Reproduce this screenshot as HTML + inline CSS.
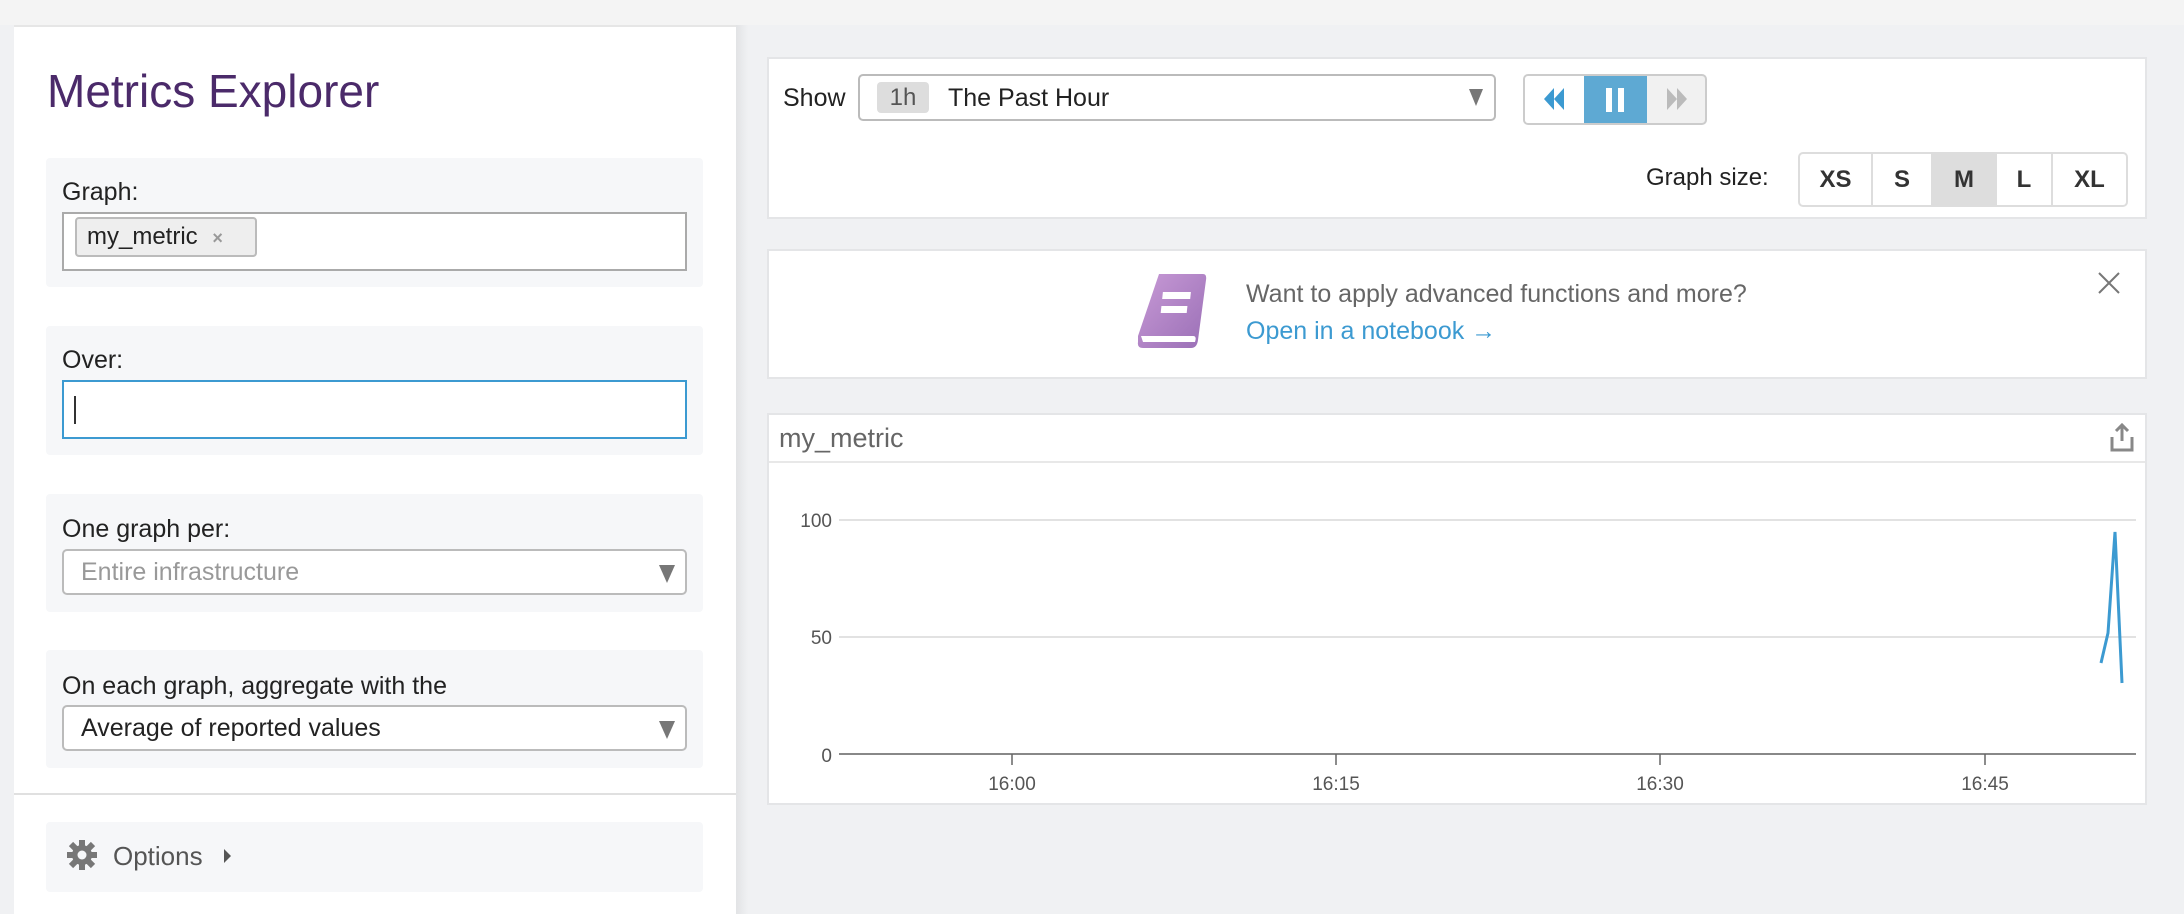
<!DOCTYPE html>
<html><head><meta charset="utf-8"><style>
*{box-sizing:border-box;margin:0;padding:0}
body{width:2184px;height:914px;background:#f0f1f3;font-family:"Liberation Sans",sans-serif;position:relative;overflow:hidden;color:#333}
.a{position:absolute}
.top{left:0;top:0;width:2184px;height:25px;background:#f4f4f4}
.panel{left:14px;top:25px;width:722px;height:889px;background:#fff;border-top:2px solid #e6e6e6}
.shadow{left:736px;top:25px;width:12px;height:889px;background:linear-gradient(90deg,#e2e3e5,#f0f1f3)}
.box{left:46px;width:657px;background:#f6f7f9;border-radius:4px}
.lbl{font-size:25px;color:#222;left:62px}
.inp{left:62px;width:625px;background:#fff;border:2px solid #aaa}
.sel{left:62px;width:625px;height:46px;background:#fff;border:2px solid #bbb;border-radius:5px;font-size:25px;padding-left:17px;line-height:42px}
.tri{position:absolute;right:10px;top:14px;width:0;height:0;border-left:8px solid transparent;border-right:8px solid transparent;border-top:18px solid #777}
.card{background:#fff;border:2px solid #e4e5e7}
.gs{top:152px;height:55px;border:2px solid #ddd;border-left:none;font-weight:bold;font-size:24px;line-height:51px;text-align:center;color:#333;background:#fff}
</style></head><body>
<div class="a top"></div>
<div class="a panel"></div>
<div class="a shadow"></div>
<div class="a" style="left:47px;top:64px;font-size:46px;color:#4b2a6a;font-weight:300">Metrics Explorer</div>

<div class="a box" style="top:158px;height:129px"></div>
<div class="a lbl" style="top:178px">Graph:</div>
<div class="a inp" style="top:212px;height:59px"></div>
<div class="a" style="left:75px;top:217px;width:182px;height:40px;background:#eee;border:2px solid #bbb;border-radius:4px;font-size:24px;line-height:36px;padding-left:10px;color:#222">my_metric <span style="color:#999;font-size:18px;margin-left:8px;font-weight:bold">×</span></div>

<div class="a box" style="top:326px;height:129px"></div>
<div class="a lbl" style="top:346px">Over:</div>
<div class="a inp" style="top:380px;height:59px;border-color:#3c9ad1"></div>
<div class="a" style="left:74px;top:396px;width:2px;height:28px;background:#333"></div>

<div class="a box" style="top:494px;height:118px"></div>
<div class="a lbl" style="top:515px">One graph per:</div>
<div class="a sel" style="top:549px;color:#999">Entire infrastructure<div class="tri"></div></div>

<div class="a box" style="top:650px;height:118px"></div>
<div class="a lbl" style="top:672px">On each graph, aggregate with the</div>
<div class="a sel" style="top:705px;color:#222">Average of reported values<div class="tri"></div></div>

<div class="a" style="left:14px;top:793px;width:722px;height:2px;background:#e0e0e0"></div>
<div class="a box" style="top:822px;height:70px"></div>
<svg class="a" style="left:66px;top:839px" width="32" height="32" viewBox="0 0 32 32"><g fill="#777"><circle cx="16" cy="16" r="10"/><g stroke="#777" stroke-width="6"><line x1="16" y1="1" x2="16" y2="31"/><line x1="1" y1="16" x2="31" y2="16"/><line x1="5" y1="5" x2="27" y2="27"/><line x1="27" y1="5" x2="5" y2="27"/></g><circle cx="16" cy="16" r="4.5" fill="#f6f7f9"/></g></svg>
<div class="a" style="left:113px;top:841px;font-size:26px;color:#555">Options</div>
<div class="a" style="left:224px;top:849px;border-top:7px solid transparent;border-bottom:7px solid transparent;border-left:7px solid #555"></div>

<!-- top controls card -->
<div class="a card" style="left:767px;top:57px;width:1380px;height:162px"></div>
<div class="a" style="left:783px;top:84px;font-size:25px;color:#222">Show</div>
<div class="a" style="left:858px;top:74px;width:638px;height:47px;border:2px solid #bbb;border-radius:5px;background:#fff"></div>
<div class="a" style="left:877px;top:82px;width:52px;height:31px;background:#ddd;border-radius:4px;font-size:24px;line-height:31px;text-align:center;color:#555">1h</div>
<div class="a" style="left:948px;top:84px;font-size:25px;color:#222">The Past Hour</div>
<div class="a" style="left:1469px;top:89px;border-left:7px solid transparent;border-right:7px solid transparent;border-top:17px solid #777"></div>
<div class="a" style="left:1523px;top:74px;width:184px;height:51px;border:2px solid #ccc;border-radius:5px;background:#f1f1f1;overflow:hidden">
 <div class="a" style="left:0;top:0;width:59px;height:49px;background:#fff"></div>
 <div class="a" style="left:59px;top:-2px;width:63px;height:53px;background:#5ea9d3"></div>
</div>
<svg class="a" style="left:1542px;top:86px" width="24" height="26"><path d="M12 2 L2 13 L12 24Z M22 2 L12 13 L22 24Z" fill="#3c9ad1"/></svg>
<div class="a" style="left:1606px;top:88px;width:6px;height:24px;background:#fff"></div>
<div class="a" style="left:1618px;top:88px;width:6px;height:24px;background:#fff"></div>
<svg class="a" style="left:1665px;top:86px" width="24" height="26"><path d="M2 2 L12 13 L2 24Z M12 2 L22 13 L12 24Z" fill="#bbb"/></svg>
<div class="a" style="left:1646px;top:164px;font-size:24px;color:#222">Graph size:</div>
<div class="a gs" style="left:1798px;width:75px;border-left:2px solid #ddd;border-radius:5px 0 0 5px">XS</div>
<div class="a gs" style="left:1873px;width:60px">S</div>
<div class="a gs" style="left:1933px;width:64px;background:#ddd">M</div>
<div class="a gs" style="left:1997px;width:56px">L</div>
<div class="a gs" style="left:2053px;width:75px;border-radius:0 5px 5px 0">XL</div>

<!-- notebook card -->
<div class="a card" style="left:767px;top:249px;width:1380px;height:130px"></div>
<svg class="a" style="left:1135px;top:272px" width="80" height="78" viewBox="0 0 80 78"><defs><linearGradient id="g" x1="0" y1="0" x2="1" y2="1"><stop offset="0" stop-color="#c89ad6"/><stop offset="1" stop-color="#9a6fb6"/></linearGradient></defs><path d="M24 2 H68 Q72 2 71 8 L63 68 Q62 76 56 76 H8 Q2 76 3 70 L3 64 Z" fill="url(#g)"/><path d="M6 64 H58 Q62 64 60 70 H8" fill="#fff"/><rect x="30" y="20" width="28" height="7" fill="#fff" transform="skewX(-6)"/><rect x="30" y="34" width="26" height="7" fill="#fff" transform="skewX(-6)"/></svg>
<div class="a" style="left:1246px;top:280px;font-size:25px;color:#666">Want to apply advanced functions and more?</div>
<div class="a" style="left:1246px;top:317px;font-size:25px;color:#3c9ad1">Open in a notebook →</div>
<svg class="a" style="left:2098px;top:272px" width="22" height="22"><path d="M1 1 L21 21 M21 1 L1 21" stroke="#777" stroke-width="2"/></svg>

<!-- graph card -->
<div class="a card" style="left:767px;top:413px;width:1380px;height:392px"></div>
<div class="a" style="left:769px;top:461px;width:1376px;height:2px;background:#e8e8e8"></div>
<div class="a" style="left:779px;top:423px;font-size:27px;color:#666">my_metric</div>
<svg class="a" style="left:2108px;top:423px" width="28" height="30"><path d="M14 2 V18 M8 8 L14 2 L20 8" stroke="#888" stroke-width="3" fill="none"/><path d="M4 14 V27 H24 V14" stroke="#888" stroke-width="3" fill="none"/></svg>
<svg class="a" style="left:767px;top:413px" width="1380" height="392">
<g font-family="Liberation Sans" font-size="19" fill="#555" text-anchor="end"><text x="65" y="114">100</text><text x="65" y="231">50</text><text x="65" y="349">0</text></g>
<line x1="72" y1="107" x2="1369" y2="107" stroke="#e2e2e2" stroke-width="2"/>
<line x1="72" y1="224" x2="1369" y2="224" stroke="#e2e2e2" stroke-width="2"/>
<line x1="72" y1="341" x2="1369" y2="341" stroke="#888" stroke-width="2"/>
<g stroke="#666" stroke-width="1.5"><line x1="245" y1="341" x2="245" y2="352"/><line x1="569" y1="341" x2="569" y2="352"/><line x1="893" y1="341" x2="893" y2="352"/><line x1="1218" y1="341" x2="1218" y2="352"/></g>
<g font-family="Liberation Sans" font-size="19" fill="#555" text-anchor="middle"><text x="245" y="377">16:00</text><text x="569" y="377">16:15</text><text x="893" y="377">16:30</text><text x="1218" y="377">16:45</text></g>
<polyline points="1334,250 1341,220 1348,119 1355,270" fill="none" stroke="#3c9ad1" stroke-width="3"/>
</svg>
</body></html>
